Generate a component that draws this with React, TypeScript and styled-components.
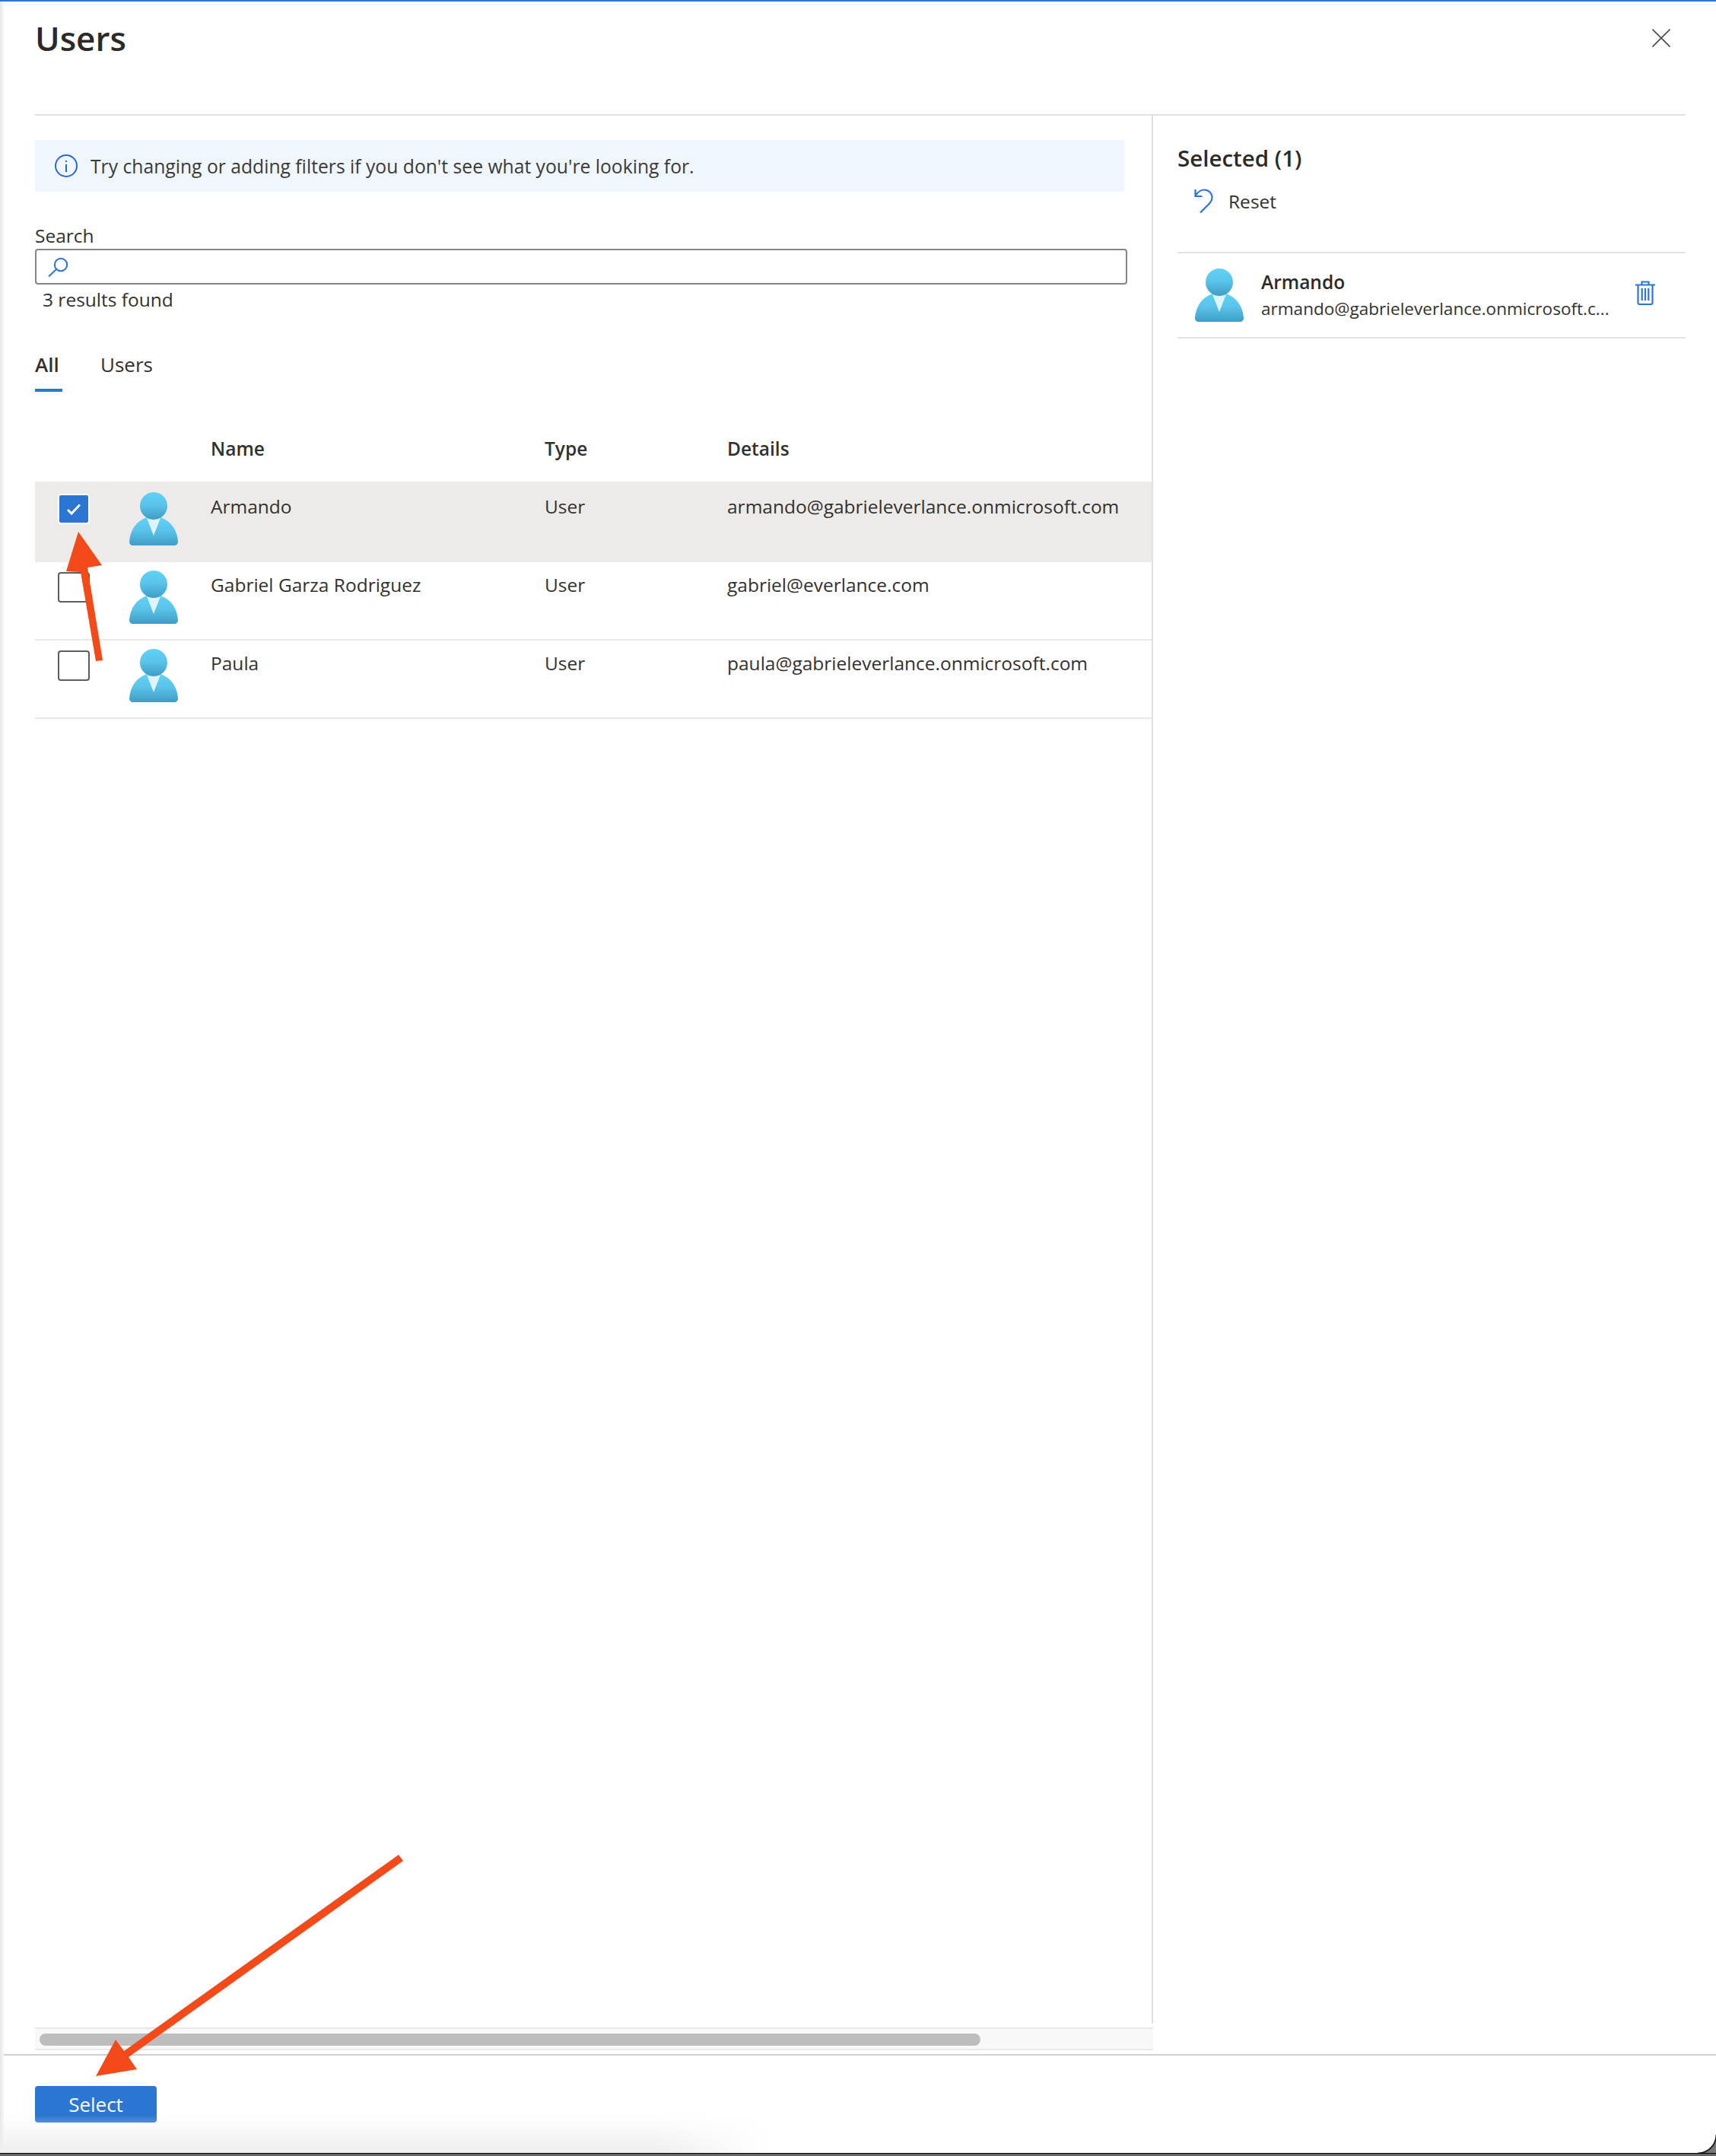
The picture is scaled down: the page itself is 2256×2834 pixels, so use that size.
import React from 'react';
import styled, { createGlobalStyle } from 'styled-components';

const GlobalStyle = createGlobalStyle`
    html, body {
        margin: 0;
        padding: 0;
        background: #ffffff;
    }
    body {
        font-family: "Open Sans", "Noto Sans", sans-serif;
        color: #323130;
    }
`;

const blue = '#2b76d3';
const line = '#e1e1e1';

const Blade = styled.div`
    position: relative;
    width: 2256px;
    height: 2834px;
    box-sizing: border-box;
    border-top: 2px solid ${blue};
    display: flex;
    flex-direction: column;
    overflow: hidden;
    background: #ffffff;
`;

const Header = styled.header`
    height: 148px;
    margin: 0 40px 0 46px;
    border-bottom: 2px solid ${line};
    display: flex;
    justify-content: space-between;
    align-items: flex-start;
    flex: none;
`;

const Title = styled.h1`
    margin: 18px 0 0;
    font-size: 44px;
    line-height: 60px;
    font-weight: 600;
    color: #2b2a29;
`;

const CloseButton = styled.button`
    margin: 36px 20px 0 0;
    padding: 0;
    border: 0;
    background: none;
    width: 24px;
    height: 24px;
`;

const Body = styled.div`
    flex: 1;
    display: flex;
    min-height: 0;
`;

const LeftPane = styled.section`
    width: 1470px;
    margin: 0 0 5px 46px;
    flex: none;
    display: flex;
    flex-direction: column;
`;

const LeftContent = styled.div`
    flex: 1;
    border-right: 2px solid ${line};
    margin-bottom: 5px;
    padding-top: 32px;
`;

const InfoBanner = styled.div`
    width: 1432px;
    height: 68px;
    background: #f0f6fe;
    display: flex;
    align-items: center;
    padding-left: 26px;
    box-sizing: border-box;
    gap: 17px;
    font-size: 24.7px;
    color: #3b3a39;
`;

const SearchLabel = styled.label`
    display: block;
    margin: 44px 0 3px;
    font-size: 24.5px;
    line-height: 28px;
`;

const SearchBox = styled.div`
    width: 1436px;
    height: 47px;
    box-sizing: border-box;
    border: 2px solid #858585;
    border-radius: 4px;
    display: flex;
    align-items: center;
    padding-left: 15px;
`;

const ResultCount = styled.div`
    margin: 4px 0 0 10px;
    font-size: 24.5px;
    line-height: 32px;
`;

const Tabs = styled.div`
    display: flex;
    gap: 50px;
    margin-top: 46px;
    font-size: 26px;
`;

const Tab = styled.div<{ $active?: boolean }>`
    height: 59px;
    min-width: 36px;
    line-height: 46px;
    box-sizing: border-box;
    font-weight: ${(p) => (p.$active ? 600 : 400)};
    border-bottom: ${(p) => (p.$active ? `4px solid ${blue}` : '0')};
`;

const HeadRow = styled.div`
    display: grid;
    grid-template-columns: 231px 439px 240px 1fr;
    height: 121px;
    box-sizing: border-box;
    padding-top: 58px;
    font-size: 24.5px;
    font-weight: 600;
    line-height: 34px;
`;

const Row = styled.div<{ $selected?: boolean }>`
    display: grid;
    grid-template-columns: 124px 107px 439px 240px 1fr;
    height: 103px;
    box-sizing: border-box;
    background: ${(p) => (p.$selected ? '#edebe9' : 'transparent')};
    box-shadow: ${(p) => (p.$selected ? '0 -3px 0 #edebe9' : 'none')};
    border-bottom: ${(p) => (p.$selected ? '0' : `2px solid #e8e8e8`)};
    font-size: 24.5px;
    line-height: 34px;
`;

const CheckCell = styled.div`
    padding: 13px 0 0 30px;
`;

const Check = styled.span<{ $checked?: boolean }>`
    display: flex;
    align-items: center;
    justify-content: center;
    width: 42px;
    height: 40px;
    box-sizing: border-box;
    border-radius: 4px;
    border: 2px solid ${(p) => (p.$checked ? '#ffffff' : '#605e5c')};
    background: ${(p) => (p.$checked ? blue : '#ffffff')};
`;

const AvatarCell = styled.div`
    padding-top: 11px;
`;

const TextCell = styled.div`
    padding-top: 13px;
    white-space: nowrap;
`;

const ScrollTrack = styled.div`
    height: 30px;
    box-sizing: border-box;
    background: #f8f8f8;
    border-top: 2px solid #e8e8e8;
    border-bottom: 2px solid #e8e8e8;
    padding: 6px;
    flex: none;
`;

const ScrollThumb = styled.div`
    width: 1237px;
    height: 16px;
    background: #bdbdbd;
    border-radius: 8px;
`;

const RightPane = styled.aside`
    width: 668px;
    margin-left: 32px;
    flex: none;
`;

const SelectedTitle = styled.h2`
    margin: 34px 0 0;
    font-size: 29.5px;
    line-height: 44px;
    font-weight: 600;
    color: #2b2a29;
`;

const ResetRow = styled.div`
    display: flex;
    align-items: center;
    gap: 20px;
    height: 40px;
    margin: 14px 0 0 22px;
    font-size: 24.5px;
`;

const SelectedItem = styled.div`
    margin-top: 47px;
    height: 110px;
    border-top: 2px solid ${line};
    border-bottom: 2px solid ${line};
    display: grid;
    grid-template-columns: 110px 1fr 70px;
    box-sizing: content-box;
`;

const ItemAvatar = styled.div`
    padding: 20px 0 0 23px;
`;

const ItemText = styled.div`
    padding-top: 20px;
    min-width: 0;
`;

const ItemName = styled.div`
    font-size: 24.5px;
    line-height: 36px;
    font-weight: 600;
    color: #2b2a29;
`;

const ItemMail = styled.div`
    font-size: 22.55px;
    line-height: 34px;
    white-space: nowrap;
`;

const ItemAction = styled.div`
    padding: 36px 0 0 4px;
`;

const Footer = styled.footer`
    height: 132px;
    flex: none;
    border-top: 2px solid #d0d0d0;
    box-sizing: content-box;
    padding: 40px 0 0 46px;
    margin-bottom: -40px;
`;

const SelectButton = styled.button`
    width: 160px;
    height: 48px;
    border: 0;
    border-radius: 4px;
    background: ${blue};
    color: #ffffff;
    font-family: inherit;
    font-size: 26px;
    padding: 0;
`;

const LeftEdge = styled.div`
    position: absolute;
    left: 0;
    top: 0;
    bottom: 0;
    width: 5px;
    background: linear-gradient(90deg, #e6e6e6, #f8f8f8);
`;

const BottomShade = styled.div`
    position: absolute;
    left: 0;
    bottom: 4px;
    width: 1010px;
    height: 50px;
    background: linear-gradient(180deg, rgba(239, 239, 239, 0), #efefef);
    mask-image: linear-gradient(90deg, #000 86%, transparent);
    pointer-events: none;
`;

const BottomEdge = styled.div`
    position: absolute;
    left: 0;
    right: 0;
    bottom: 0;
    height: 4px;
    background: #666666;
    border-top: 1px solid #000000;
    box-sizing: border-box;
`;

const BottomCorner = styled.div`
    position: absolute;
    right: 0;
    bottom: 4px;
    width: 24px;
    height: 24px;
    background: radial-gradient(circle at 0 0, transparent 23px, #000000 24px, #777777 26px);
`;

const Annotations = styled.svg`
    position: absolute;
    left: 0;
    top: -2px;
    pointer-events: none;
`;

const Avatar = ({ id }: { id: string }) => (
    <svg width="64" height="70" viewBox="0 0 64 70">
        <defs>
            <linearGradient id={`${id}h`} x1="0" y1="0" x2="0" y2="1">
                <stop offset="0" stopColor="#5fd2f8" />
                <stop offset="0.45" stopColor="#5bc4ea" />
                <stop offset="1" stopColor="#3f9cc5" />
            </linearGradient>
        </defs>
        <path d="M5 70C2 70 0 68 0 65C1 50 9 38 23 33L41 33C55 38 63 50 64 65C64 68 62 70 59 70Z" fill={`url(#${id}h)`} />
        <circle cx="32" cy="18" r="18" fill={`url(#${id}h)`} />
        <path d="M23 34Q32 38 41 34L32 57Z" fill="#def4fb" />
    </svg>
);

const people = [
    { name: 'Armando', mail: 'armando@gabrieleverlance.onmicrosoft.com', selected: true },
    { name: 'Gabriel Garza Rodriguez', mail: 'gabriel@everlance.com', selected: false },
    { name: 'Paula', mail: 'paula@gabrieleverlance.onmicrosoft.com', selected: false },
];

export default function App() {
    return (
        <>
            <GlobalStyle />
            <Blade>
                <Header>
                    <Title>Users</Title>
                    <CloseButton aria-label="Close">
                        <svg width="24" height="24" viewBox="0 0 24 24">
                            <path d="M0.5 0.5L23.5 23.5M23.5 0.5L0.5 23.5" stroke="#4a4a4a" strokeWidth="1.6" fill="none" />
                        </svg>
                    </CloseButton>
                </Header>
                <Body>
                    <LeftPane>
                        <LeftContent>
                            <InfoBanner>
                                <svg width="30" height="30" viewBox="0 0 30 30">
                                    <circle cx="15" cy="15" r="14" stroke="#2b66d9" strokeWidth="2" fill="none" />
                                    <path d="M15 13V23M15 8V10" stroke="#2b66d9" strokeWidth="2" />
                                </svg>
                                <span>Try changing or adding filters if you don't see what you're looking for.</span>
                            </InfoBanner>
                            <SearchLabel>Search</SearchLabel>
                            <SearchBox>
                                <svg width="26" height="26" viewBox="0 0 26 26">
                                    <circle cx="17" cy="10" r="8.2" stroke="#2b76d3" strokeWidth="2" fill="none" />
                                    <path d="M11 16L1 25.5" stroke="#2b76d3" strokeWidth="2" />
                                </svg>
                            </SearchBox>
                            <ResultCount>3 results found</ResultCount>
                            <Tabs>
                                <Tab $active>All</Tab>
                                <Tab>Users</Tab>
                            </Tabs>
                            <HeadRow>
                                <span />
                                <span>Name</span>
                                <span>Type</span>
                                <span>Details</span>
                            </HeadRow>
                            {people.map((p) => (
                                <Row key={p.name} $selected={p.selected}>
                                    <CheckCell>
                                        <Check $checked={p.selected}>
                                            {p.selected && (
                                                <svg width="18" height="15" viewBox="0 0 18 15">
                                                    <path d="M1 8L6 13L17 1.5" stroke="#ffffff" strokeWidth="3" fill="none" />
                                                </svg>
                                            )}
                                        </Check>
                                    </CheckCell>
                                    <AvatarCell>
                                        <Avatar id={p.name.slice(0, 2)} />
                                    </AvatarCell>
                                    <TextCell>{p.name}</TextCell>
                                    <TextCell>User</TextCell>
                                    <TextCell>{p.mail}</TextCell>
                                </Row>
                            ))}
                        </LeftContent>
                        <ScrollTrack>
                            <ScrollThumb />
                        </ScrollTrack>
                    </LeftPane>
                    <RightPane>
                        <SelectedTitle>Selected (1)</SelectedTitle>
                        <ResetRow>
                            <svg width="25" height="33" viewBox="0 0 25 33">
                                <path d="M1.5 1V10H10.5M1.5 9.5C5 4 9 1.5 13 1.5C19 1.5 23.5 6 23.5 11.5C23.5 15 21.5 18 19 20.5L8 31.5" stroke="#2b76d3" strokeWidth="2.2" fill="none" />
                            </svg>
                            <span>Reset</span>
                        </ResetRow>
                        <SelectedItem>
                            <ItemAvatar>
                                <Avatar id="sel" />
                            </ItemAvatar>
                            <ItemText>
                                <ItemName>Armando</ItemName>
                                <ItemMail>armando@gabrieleverlance.onmicrosoft.c...</ItemMail>
                            </ItemText>
                            <ItemAction>
                                <svg width="26" height="32" viewBox="0 0 26 32">
                                    <path d="M0 5.5H26M8.5 5.5V1.5H17.5V5.5M3.5 5.5V29Q3.5 31 5.5 31H20.5Q22.5 31 22.5 29V5.5M8.7 10V26M13 10V26M17.3 10V26" stroke="#2b76d3" strokeWidth="2.2" fill="none" />
                                </svg>
                            </ItemAction>
                        </SelectedItem>
                    </RightPane>
                </Body>
                <Footer>
                    <SelectButton>Select</SelectButton>
                </Footer>
                <LeftEdge />
                <BottomShade />
                <BottomEdge />
                <BottomCorner />
                <Annotations width="2256" height="2834" viewBox="0 0 2256 2834">
                    <polygon points="103,699 134,743 115,746 135,868 126,869 106,752 87,751" fill="#f44a1a" />
                    <polygon points="524,2438 530,2446 169,2704 180,2720 126,2729 152,2681 163,2696" fill="#f44a1a" />
                </Annotations>
            </Blade>
        </>
    );
}
